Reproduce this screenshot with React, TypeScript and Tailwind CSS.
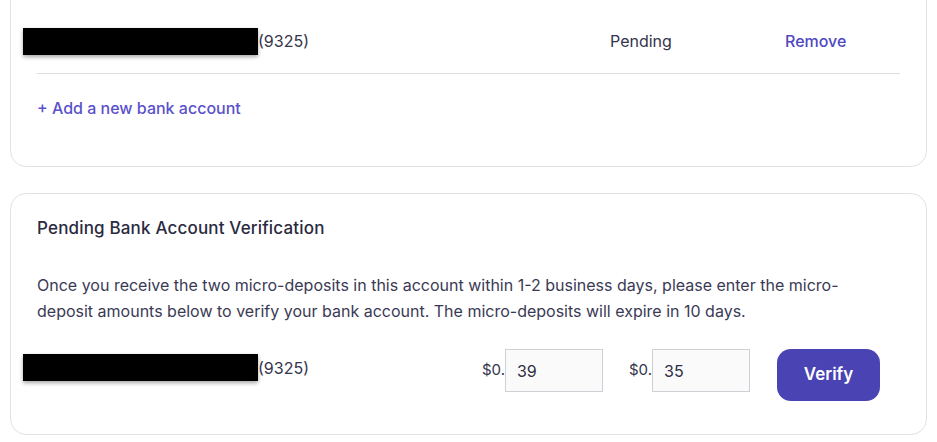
import React from "react";

function Redacted() {
  return <div className="h-[27px] w-[235px] bg-black shadow-[0_2px_4px_rgba(0,0,0,0.35)]" />;
}

function AmountInput({ value }: { value: string }) {
  return (
    <div className="flex items-center">
      <span className="text-[15px] text-[#34344d]">$0.</span>
      <div className="flex h-[43px] w-[98px] items-center border border-[#cfcfd6] bg-[#fafafa] pl-[11px] text-[16px] text-[#2d2d45]">
        {value}
      </div>
    </div>
  );
}

export default function App() {
  return (
    <div
      className="min-h-[442px] w-[937px] overflow-hidden bg-white pl-[10px] pr-[10px]"
      style={{ fontFamily: "Inter, 'Noto Sans', sans-serif" }}
    >
      {/* Card 1 (top cut off) */}
      <div className="-mt-[20px] rounded-[16px] border border-[#e2e2e7] bg-white pb-[48px] pl-[26px] pr-[26px] pt-[36px]">
        <div className="flex h-[48px] items-center">
          <div className="-ml-[14px] flex flex-1 items-center">
            <Redacted />
            <span className="text-[16px] text-[#34344d]">(9325)</span>
          </div>
          <div className="w-[175px] text-[16px] text-[#34344d]">Pending</div>
          <div className="w-[115px] text-[16px] font-medium text-[#5048c0]">Remove</div>
        </div>
        <div className="mt-[8px] h-px bg-[#dcdce2]" />
        <div className="mt-[24px] text-[16px] font-medium leading-[20px] text-[#5a51cc]">
          + Add a new bank account
        </div>
      </div>

      {/* Card 2 */}
      <div className="mt-[26px] rounded-[16px] border border-[#e2e2e7] bg-white pb-[33px] pl-[26px] pr-[46px] pt-[22px]">
        <h2 className="text-[17px] font-medium leading-[24px] tracking-[0.01em] text-[#2a2a40]">
          Pending Bank Account Verification
        </h2>
        <p className="mt-[32px] text-[16px] leading-[26px] text-[#3a3a55]">
          Once you receive the two micro-deposits in this account within 1-2 business days, please enter the micro-
          <br />
          deposit amounts below to verify your bank account. The micro-deposits will expire in 10 days.
        </p>
        <div className="mt-[25px] flex items-start">
          <div className="-ml-[14px] mt-[5px] flex flex-1 items-center">
            <Redacted />
            <span className="text-[16px] text-[#34344d]">(9325)</span>
          </div>
          <div className="flex items-center gap-[26px]">
            <AmountInput value="39" />
            <AmountInput value="35" />
          </div>
          <button className="ml-[27px] h-[52px] w-[103px] rounded-[14px] bg-[#4a43b4] text-[17px] font-semibold text-white">
            Verify
          </button>
        </div>
      </div>
    </div>
  );
}
